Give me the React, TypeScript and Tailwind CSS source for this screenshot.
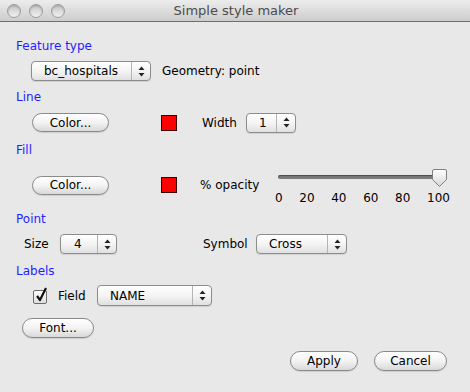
import React from "react";

function Arrows() {
  return (
    <svg width="7" height="11" viewBox="0 0 7 11" aria-hidden>
      <path d="M3.5 0.5 L6.5 4 L0.5 4 Z" fill="#222" />
      <path d="M3.5 10.5 L6.5 7 L0.5 7 Z" fill="#222" />
    </svg>
  );
}

function AquaButton({ label, className }: { label: string; className: string }) {
  return (
    <div
      className={`flex h-[19px] items-center justify-center rounded-full border border-[#8a8a8a] bg-linear-to-b from-white via-[#f3f3f3] to-[#d9d9d9] text-[12px] text-black shadow-[0_1px_1px_rgba(0,0,0,0.12)] ${className}`}
    >
      {label}
    </div>
  );
}

function Popup({
  label,
  className,
  textClass = "pl-3",
}: {
  label: string;
  className: string;
  textClass?: string;
}) {
  return (
    <div
      className={`flex h-[20px] items-stretch rounded-[4px] border border-[#8c8c8c] bg-linear-to-b from-white via-[#f4f4f4] to-[#e0e0e0] text-[12px] text-black shadow-[0_1px_1px_rgba(0,0,0,0.1)] ${className}`}
    >
      <div className={`flex flex-1 items-center ${textClass}`}>{label}</div>
      <div className="flex w-[19px] items-center justify-center border-l border-[#b4b4b4]">
        <Arrows />
      </div>
    </div>
  );
}

function Swatch() {
  return <div className="h-[16px] w-[16px] border border-[#3a0000] bg-[#ff0000]" />;
}

function Heading({ children, className }: { children: React.ReactNode; className: string }) {
  return (
    <div className={`flex h-[14px] items-center pl-[16px] text-[12px] text-[#1f1fff] ${className}`}>
      {children}
    </div>
  );
}

export default function App() {
  const ticks = ["0", "20", "40", "60", "80", "100"];
  return (
    <div className="h-[392px] w-[470px] overflow-hidden bg-[#e8e8e8] font-['DejaVu_Sans',sans-serif] text-[12px] text-black">
      {/* title bar */}
      <div className="relative flex h-[22px] items-center justify-center border-b border-[#6f6f6f] bg-linear-to-b from-[#ececec] to-[#cdcdcd]">
        <div className="absolute left-[7px] top-[4px] flex gap-[8px]">
          {[0, 1, 2].map((i) => (
            <div
              key={i}
              className="h-[14px] w-[14px] rounded-full border border-[#9c9c9c] bg-linear-to-b from-[#c4c4c4] to-[#f2f2f2] shadow-[inset_0_1px_2px_rgba(0,0,0,0.2)]"
            />
          ))}
        </div>
        <span className="pl-[2px] text-[13px] text-[#4b4b4b]">Simple style maker</span>
      </div>

      <Heading className="mt-[17px]">Feature type</Heading>
      <div className="mt-[8px] flex h-[20px] items-center pl-[31px]">
        <Popup label="bc_hospitals" className="w-[120px]" />
        <span className="ml-[11px]">Geometry: point</span>
      </div>

      <Heading className="mt-[9px]">Line</Heading>
      <div className="mt-[8px] flex h-[21px] items-center pl-[32px]">
        <AquaButton label="Color..." className="w-[77px]" />
        <div className="ml-[52px]">
          <Swatch />
        </div>
        <span className="ml-[25px] w-[44px]">Width</span>
        <Popup label="1" className="w-[50px]" textClass="pl-[12px]" />
      </div>

      <Heading className="mt-[10px]">Fill</Heading>
      <div className="mt-[9px] flex h-[38px] pl-[32px]">
        <div className="flex h-full items-center">
          <AquaButton label="Color..." className="w-[77px]" />
          <div className="ml-[52px]">
            <Swatch />
          </div>
          <span className="ml-[23px] w-[78px]">% opacity</span>
        </div>
        <div className="flex w-[178px] flex-col">
          <div className="relative mt-[9px] h-[4px] w-[169px] rounded-full bg-[#7a7a7a] shadow-[inset_0_1px_1px_rgba(0,0,0,0.4)]">
            <svg
              className="absolute left-[154px] top-[-6px]"
              width="15"
              height="18"
              viewBox="0 0 15 18"
              aria-hidden
            >
              <defs>
                <linearGradient id="th" x1="0" y1="0" x2="0" y2="1">
                  <stop offset="0" stopColor="#ffffff" />
                  <stop offset="1" stopColor="#d6d6d6" />
                </linearGradient>
              </defs>
              <path
                d="M2 0.5 H13 Q14.5 0.5 14.5 2 V10.5 L7.5 17.5 L0.5 10.5 V2 Q0.5 0.5 2 0.5 Z"
                fill="url(#th)"
                stroke="#808080"
              />
            </svg>
          </div>
          <div className="ml-[-3px] mt-[13px] flex w-[175px] justify-between text-[12px] leading-none">
            {ticks.map((t) => (
              <span key={t}>{t}</span>
            ))}
          </div>
        </div>
      </div>

      <Heading className="mt-[8px]">Point</Heading>
      <div className="mt-[8px] flex h-[20px] items-center pl-[24px]">
        <span className="w-[36px]">Size</span>
        <Popup label="4" className="w-[57px]" textClass="pl-[13px]" />
        <span className="ml-[86px] w-[53px]">Symbol</span>
        <Popup label="Cross" className="w-[91px]" />
      </div>

      <Heading className="mt-[10px]">Labels</Heading>
      <div className="mt-[7px] flex h-[21px] items-center pl-[33px]">
        <div className="relative mt-[3px] h-[14px] w-[14px] rounded-[2px] border border-[#6c6c6c] bg-linear-to-b from-white to-[#dedede]">
          <svg
            className="absolute left-[1px] top-[-4px]"
            width="14"
            height="16"
            viewBox="0 0 14 16"
            aria-hidden
          >
            <path
              d="M2 9 L5 13 L11 1"
              fill="none"
              stroke="#111"
              strokeWidth="2.2"
              strokeLinejoin="round"
            />
          </svg>
        </div>
        <span className="ml-[11px] w-[39px]">Field</span>
        <Popup label="NAME" className="h-[21px] w-[115px]" textClass="pl-[12px]" />
      </div>

      <div className="mt-[12px] flex pl-[22px]">
        <AquaButton label="Font..." className="h-[20px] w-[72px]" />
      </div>

      <div className="mt-[13px] flex gap-[16px] pl-[290px]">
        <AquaButton label="Apply" className="h-[20px] w-[68px]" />
        <AquaButton label="Cancel" className="h-[20px] w-[73px]" />
      </div>
    </div>
  );
}
